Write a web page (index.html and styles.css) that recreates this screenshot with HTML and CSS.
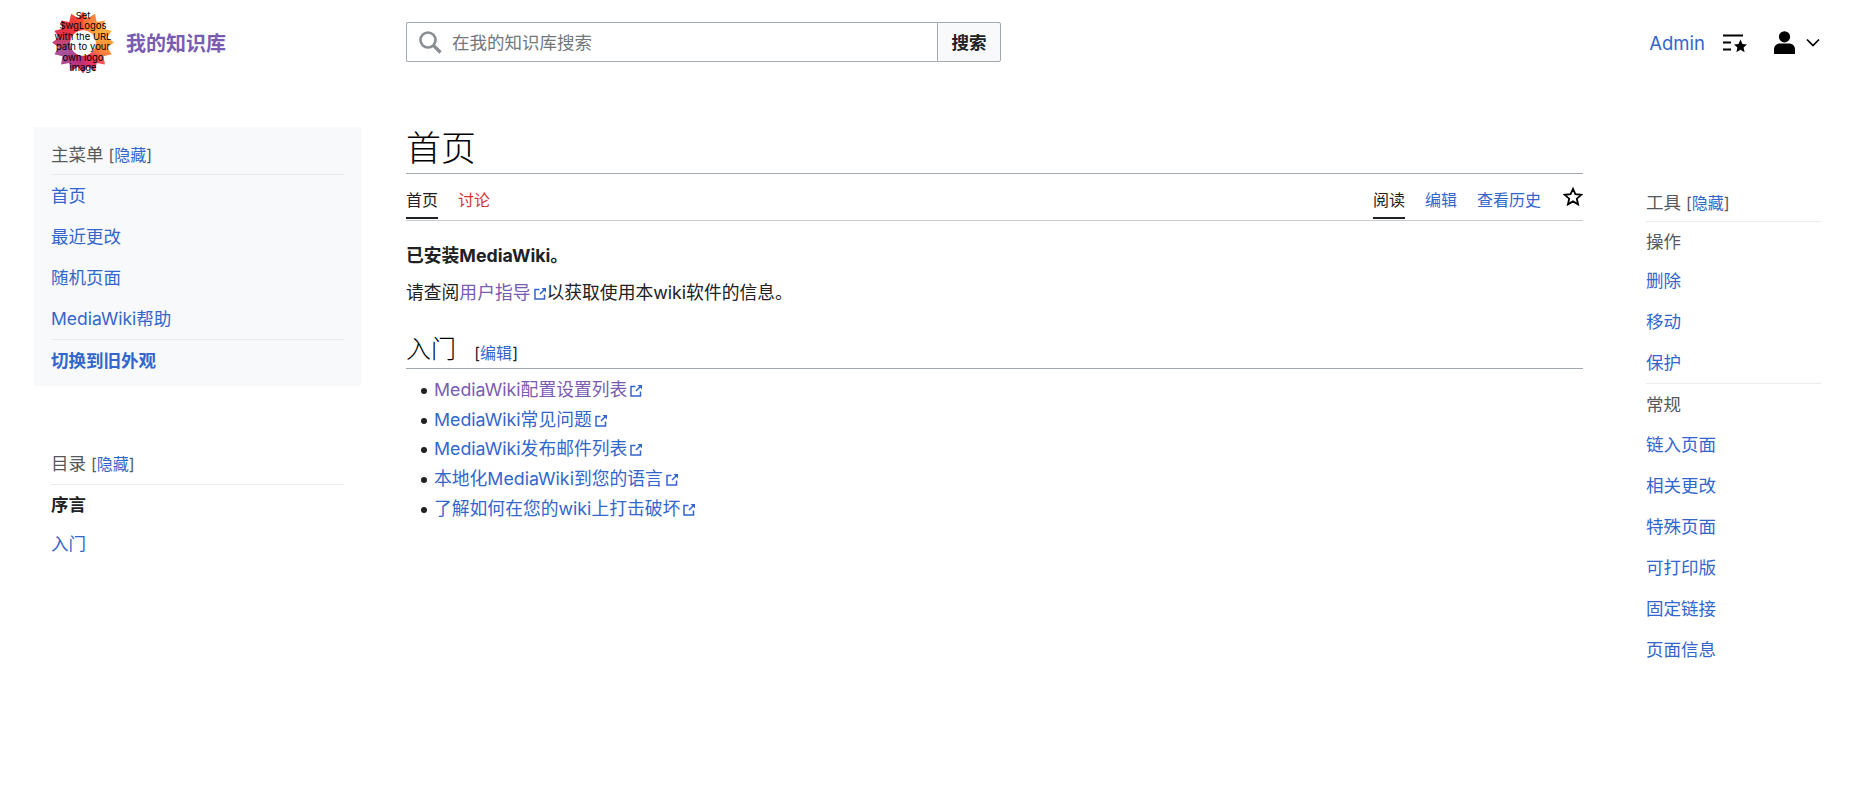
FILE: index.html
```html
<!DOCTYPE html>
<html lang="zh-CN">
<head>
    <meta charset="UTF-8">
    <title>我的知识库</title>
    <link rel="stylesheet" href="styles.css">
</head>
<body>
    <header class="site-header">
        <a class="brand" href="#">
            <span class="logo">
                <span class="logo-star"></span>
                <span class="logo-text">Set<br>$wgLogos<br>with the URL<br>path to your<br>own logo<br>image</span>
            </span>
            <span class="brand-name">我的知识库</span>
        </a>
        <form class="search">
            <div class="search-field">
                <svg class="search-icon" viewBox="0 0 24 24"><circle cx="10" cy="10" r="7.5" fill="none" stroke="#8a8d91" stroke-width="2.6"/><path d="M15.5 15.5 22.5 22.5" stroke="#8a8d91" stroke-width="3.2" fill="none"/></svg>
                <span class="search-placeholder">在我的知识库搜索</span>
            </div>
            <button class="search-btn" type="button">搜索</button>
        </form>
        <nav class="user-links">
            <a href="#">Admin</a>
            <svg class="watch-icon" viewBox="0 0 24 20"><path d="M0 1.5h20v2H0zM0 8.500h8v2H0zM0 15.500h8v2H0z"/><path d="M17.500 6.500l2 4.600 4.500.4-3.400 3 1 4.700-4.100-2.500-4.100 2.500 1-4.700-3.400-3 4.500-.4z"/></svg>
            <svg class="user-icon" viewBox="0 0 21 23"><circle cx="10.500" cy="5.800" r="5.600"/><path d="M0 23v-4.500C0 14.500 3 12.500 6 12.500h9c3 0 6 2 6 6V23z"/></svg>
            <svg class="chevron" viewBox="0 0 14 9"><path d="M1 1.500 7 7.500 13 1.500" fill="none" stroke="#000" stroke-width="1.700"/></svg>
        </nav>
    </header>

    <div class="page">
        <aside class="left-col">
            <div class="side-panel main-menu">
                <div class="panel-title">主菜单 <small>[<a href="#">隐藏</a>]</small></div>
                <ul class="side-list">
                    <li><a href="#">首页</a></li>
                    <li><a href="#">最近更改</a></li>
                    <li><a href="#">随机页面</a></li>
                    <li><a href="#">MediaWiki帮助</a></li>
                </ul>
                <div class="switch-skin"><a href="#">切换到旧外观</a></div>
            </div>
            <div class="side-panel toc">
                <div class="panel-title">目录 <small>[<a href="#">隐藏</a>]</small></div>
                <ul class="side-list">
                    <li class="current">序言</li>
                    <li><a href="#">入门</a></li>
                </ul>
            </div>
        </aside>

        <main class="content">
            <h1>首页</h1>
            <div class="tabs">
                <div class="tab-group">
                    <a class="tab active" href="#">首页</a>
                    <a class="tab new" href="#">讨论</a>
                </div>
                <div class="tab-group">
                    <a class="tab active" href="#">阅读</a>
                    <a class="tab" href="#">编辑</a>
                    <a class="tab" href="#">查看历史</a>
                    <svg class="star" viewBox="0 0 20 19"><path d="M10 1.800l2.400 5.400 5.800.6-4.400 3.900 1.300 5.700-5.100-3-5.100 3 1.300-5.700L1.800 7.800l5.800-.6z" fill="none" stroke="#000" stroke-width="1.800"/></svg>
                </div>
            </div>
            <p class="lead"><b>已安装MediaWiki。</b></p>
            <p>请查阅<a class="visited ext" href="#">用户指导</a>以获取使用本wiki软件的信息。</p>
            <h2>入门 <small>[<a href="#">编辑</a>]</small></h2>
            <ul class="links">
                <li><a class="visited ext" href="#">MediaWiki配置设置列表</a></li>
                <li><a class="ext" href="#">MediaWiki常见问题</a></li>
                <li><a class="ext" href="#">MediaWiki发布邮件列表</a></li>
                <li><a class="ext" href="#">本地化MediaWiki到您的语言</a></li>
                <li><a class="ext" href="#">了解如何在您的wiki上打击破坏</a></li>
            </ul>
        </main>

        <aside class="right-col">
            <div class="panel-title">工具 <small>[<a href="#">隐藏</a>]</small></div>
            <div class="tool-head">操作</div>
            <ul class="side-list">
                <li><a href="#">删除</a></li>
                <li><a href="#">移动</a></li>
                <li><a href="#">保护</a></li>
            </ul>
            <div class="tool-head ruled">常规</div>
            <ul class="side-list">
                <li><a href="#">链入页面</a></li>
                <li><a href="#">相关更改</a></li>
                <li><a href="#">特殊页面</a></li>
                <li><a href="#">可打印版</a></li>
                <li><a href="#">固定链接</a></li>
                <li><a href="#">页面信息</a></li>
            </ul>
        </aside>
    </div>
</body>
</html>
```

FILE: styles.css
```css
/* General */
body {
    margin: 0;
    background: #fff;
    color: #202122;
    font-family: 'Inter', 'Noto Sans CJK SC', sans-serif;
    font-size: 17.5px;
    overflow: hidden;
}

a {
    color: #36c;
    text-decoration: none;
}

a.visited {
    color: #795cb2;
}

small {
    font-size: 16px;
}

/* Header */
.site-header {
    display: flex;
    align-items: center;
    height: 85px;
    padding: 0 39px 0 52px;
}

.brand {
    display: flex;
    align-items: center;
    width: 354px;
    color: #795cb2;
}

.logo {
    position: relative;
    display: block;
    width: 62px;
    height: 62px;
    margin-right: 12px;
}

.logo-star {
    display: block;
    width: 62px;
    height: 62px;
    background:
        radial-gradient(circle closest-side, #fff 0 40%, transparent 42%),
        conic-gradient(#ff6a3a, #ffb040 60deg, #ff8a3a 110deg, #f0365a 150deg, #b8307e 190deg, #a8559f 250deg, #e83048 300deg, #ff4a30);
    clip-path: polygon(50% 0, 57.8% 10.8%, 69.1% 3.8%, 72.2% 16.8%, 85.4% 14.6%, 83.2% 27.8%, 96.2% 30.9%, 89.2% 42.2%, 100% 50%, 89.2% 57.8%, 96.2% 69.1%, 83.2% 72.2%, 85.4% 85.4%, 72.2% 83.2%, 69.1% 96.2%, 57.8% 89.2%, 50% 100%, 42.2% 89.2%, 30.9% 96.2%, 27.8% 83.2%, 14.6% 85.4%, 16.8% 72.2%, 3.8% 69.1%, 10.8% 57.8%, 0 50%, 10.8% 42.2%, 3.8% 30.9%, 16.8% 27.8%, 14.6% 14.6%, 27.8% 16.8%, 30.9% 3.8%, 42.2% 10.8%);
}

.logo-text {
    position: absolute;
    top: -1px;
    left: -3px;
    width: 68px;
    color: #000;
    font-size: 9.500px;
    line-height: 10.500px;
    text-align: center;
}

.brand-name {
    font-size: 20px;
    font-weight: bold;
}

.search {
    display: flex;
    width: 595px;
    height: 40px;
    margin-top: -2px;
}

.search-field {
    display: flex;
    flex: 1;
    align-items: center;
    border: 1px solid #a2a9b1;
    border-right: none;
    border-radius: 2px 0 0 2px;
}

.search-icon {
    width: 24px;
    height: 24px;
    margin: 0 10px 0 11px;
}

.search-placeholder {
    color: #72777d;
}

.search-btn {
    width: 64px;
    padding: 0;
    border: 1px solid #a2a9b1;
    border-radius: 0 2px 2px 0;
    background: #f8f9fa;
    color: #202122;
    font-family: inherit;
    font-size: 17.5px;
    font-weight: bold;
}

.user-links {
    display: flex;
    align-items: center;
    margin-left: auto;
    font-size: 18.500px;
}

.watch-icon {
    width: 24px;
    height: 20px;
    margin-left: 18px;
}

.user-icon {
    width: 21px;
    height: 23px;
    margin-left: 27px;
}

.chevron {
    width: 14px;
    height: 9px;
    margin-left: 11px;
}

/* Page columns */
.page {
    display: grid;
    grid-template-columns: 327px 1177px 193px;
    column-gap: 45px;
    padding-left: 34px;
}

.page > .right-col {
    margin-left: 18px;
}

/* Sidebars */
.side-panel {
    padding: 15px 17px 0;
}

.main-menu {
    height: 244px;
    margin-top: 42px;
    background: #f8f9fa;
}

.main-menu .panel-title {
    padding-bottom: 6px;
}

.toc {
    margin-top: 50px;
}

.toc .side-list li {
    height: 39px;
    line-height: 39px;
}

.panel-title {
    padding-bottom: 7px;
    border-bottom: 1px solid #eaecf0;
    color: #54595d;
    line-height: 25px;
}

.side-list {
    margin: 0;
    padding: 0;
    list-style: none;
}

.side-list li {
    height: 41px;
    line-height: 41px;
}

.current {
    font-weight: bold;
}

.switch-skin {
    padding-top: 8px;
    border-top: 1px solid #eaecf0;
    font-weight: bold;
    line-height: 25px;
}

.right-col {
    margin-top: 105px;
}

.right-col .panel-title {
    padding-bottom: 5px;
}

.tool-head {
    padding-top: 7px;
    margin-bottom: 5px;
    color: #54595d;
    line-height: 26px;
}

.tool-head.ruled {
    padding-top: 8px;
    margin-bottom: 6px;
    border-top: 1px solid #eaecf0;
}

/* Content */
.content {
    min-width: 0;
    font-size: 17.800px;
}

h1 {
    margin: 42px 0 0;
    border-bottom: 1px solid #a2a9b1;
    color: #000;
    font-family: 'Liberation Serif', 'Noto Sans CJK SC', serif;
    font-size: 35px;
    font-weight: 200;
    line-height: 46px;
}

.tabs {
    display: flex;
    justify-content: space-between;
    height: 46px;
    border-bottom: 1px solid #c8ccd1;
}

.tab-group {
    display: flex;
    column-gap: 20px;
}

.tab {
    height: 45px;
    font-size: 16px;
    line-height: 52px;
}

.tab.active {
    color: #202122;
    box-shadow: inset 0 -2px 0 #202122;
}

.tab.new {
    color: #d73333;
}

.star {
    width: 20px;
    height: 19px;
    margin-top: 13px;
    margin-left: 2px;
}

p {
    margin: 0;
    line-height: 37px;
}

.lead {
    margin-top: 15.500px;
}

h2 {
    margin: 24px 0 0;
    border-bottom: 1px solid #a2a9b1;
    color: #000;
    font-family: 'Liberation Serif', 'Noto Sans CJK SC', serif;
    font-size: 25px;
    font-weight: 200;
    line-height: 30.500px;
}

h2 small {
    margin-left: 12px;
    color: #202122;
    font-family: 'Inter', 'Noto Sans CJK SC', sans-serif;
    font-weight: normal;
    vertical-align: -1px;
}

.links {
    margin: 6px 0 0;
    padding-left: 28px;
    list-style: none;
}

.links li {
    line-height: 29.700px;
}

.links li::before {
    content: "";
    display: inline-block;
    width: 6px;
    height: 6px;
    margin: 0 7px 2px -13px;
    border-radius: 50%;
    background: #202122;
}

.ext::after {
    content: "";
    display: inline-block;
    width: 13px;
    height: 13px;
    margin-left: 3px;
    vertical-align: -1px;
    background: url("data:image/svg+xml,%3Csvg xmlns='http://www.w3.org/2000/svg' viewBox='0 0 13 13'%3E%3Cpath d='M5.500 2.500H1v9.500h9.500V7.500' fill='none' stroke='%233366cc' stroke-width='1.500'/%3E%3Cpath d='M7.500 1h4.500v4.500L10.300 3.800 6.500 7.600 5.400 6.500 9.200 2.700z' fill='%233366cc'/%3E%3C/svg%3E") no-repeat;
}
```
